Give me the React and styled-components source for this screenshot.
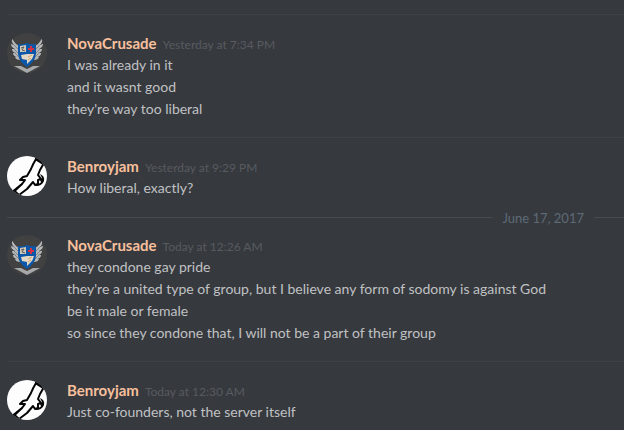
import React from "react";
import styled, { createGlobalStyle } from "styled-components";

const GlobalStyle = createGlobalStyle`
  body {
    margin: 0;
    background: #36393e;
    font-family: Lato, "Open Sans", sans-serif;
  }
`;

const Chat = styled.main`
  padding: 14px 0 0 7px;
`;

const Group = styled.article`
  display: flex;
  gap: 20px;
  padding: ${(props) => (props.$line ? "17px 20px 17px 0" : "16px 20px 17px 0")};
  border-top: ${(props) => (props.$line ? "1px solid #3e4146" : "none")};
`;

const Avatar = styled.svg`
  flex: none;
  width: 40px;
  height: 40px;
  margin-top: 1px;
  border-radius: 50%;
`;

const Body = styled.div`
  flex: 1;
  min-width: 0;
`;

const Header = styled.header`
  display: flex;
  align-items: baseline;
  gap: 6px;
  height: 22px;
  line-height: 22px;
`;

const UserName = styled.h2`
  margin: 0;
  color: #f8c09c;
  font-size: 15px;
  font-weight: 700;
`;

const Timestamp = styled.time`
  color: #585b60;
  font-size: 12px;
`;

const Message = styled.p`
  margin: 0;
  color: #c0c1c3;
  font-size: 14px;
  line-height: 22px;
`;

const DayDivider = styled.div`
  display: flex;
  align-items: center;
  gap: 10px;
  height: 1px;
  margin-top: 1px;
  color: #5e6a76;
  font-size: 13px;

  &::before,
  &::after {
    content: "";
    height: 1px;
    background: #484b50;
  }

  &::before {
    flex: 1;
  }

  &::after {
    width: 30px;
  }
`;

const CrestAvatar = () => (
  <Avatar viewBox="0 0 40 40" role="img" aria-label="NovaCrusade">
    <rect width="40" height="40" fill="#414141" />
    <g fill="#b4b6b8">
      <path d="M5 5 Q7 10 12 13 L13 27 Q9 27 8 24 L10 24 Q6 23 6 20 L9 20 Q5 19 5 16 L8 16 Q4 14 4 11 L7 12 Q4 9 5 5 Z" />
      <path d="M35 5 Q33 10 28 13 L27 27 Q31 27 32 24 L30 24 Q34 23 34 20 L31 20 Q35 19 35 16 L32 16 Q36 14 36 11 L33 12 Q36 9 35 5 Z" />
    </g>
    <g fill="none" stroke="#6d7073" strokeWidth="0.7">
      <path d="M6 11 L12 17 M7 16 L12 21 M8 20 L13 25" />
      <path d="M34 11 L28 17 M33 16 L28 21 M32 20 L27 25" />
    </g>
    <path d="M7 33 L14 33 L20 36 L26 33 L33 33 L20 40 Z" fill="#a7a8a9" />
    <path d="M11 11 Q16 12 20 10 Q24 12 29 11 V21 Q28 29 20 34 Q12 29 11 21 Z" fill="#0d57a8" />
    <path d="M13 13 L19 12 V19 H13 Z" fill="#cfc9bd" />
    <path d="M20 21 H27 Q26 25 24 27 L20 31 L20 27 L15 26 L14 22 Z" fill="#e3d8c8" />
    <path d="M14 15 L17 14 L15 17 L18 18" fill="none" stroke="#5f5a55" />
    <path d="M21 24 L25 22 M21 27 L24 25" stroke="#d3a468" />
    <path d="M24 13 V19 M21 16 H27" stroke="#d32f45" strokeWidth="2" />
  </Avatar>
);

const WingAvatar = () => (
  <Avatar viewBox="0 0 40 40" role="img" aria-label="Benroyjam">
    <rect width="40" height="40" fill="#fdfdfd" />
    <path
      d="M29 3 Q26 8 24 13 L20 20 L16 21 L13 24 L18 24 L15 28 L7 35 L12 39 L20 33 L26 26 L28 29 L31 28 L31 24 L34 23 L31 19 L33 14 L37 7 Z"
      fill="#fdfdfd"
      stroke="#050505"
      strokeWidth="2"
      strokeLinejoin="round"
    />
    <path d="M33 18 Q38 20 37 25 Q35 30 29 30 L29 28 Q33 28 34 26 L33 24 L35 22 Z" fill="#050505" />
    <path d="M28 1 L38 7 L36 9 L28 4 Z" fill="#050505" />
    <path d="M6 34 L15 27 L16 28 L9 35 L12 38 L10 40 L5 36 Z" fill="#050505" />
  </Avatar>
);

const conversation = [
  {
    id: 1,
    user: "NovaCrusade",
    time: "Yesterday at 7:34 PM",
    messages: ["I was already in it", "and it wasnt good", "they're way too liberal"],
  },
  {
    id: 2,
    user: "Benroyjam",
    time: "Yesterday at 9:29 PM",
    messages: ["How liberal, exactly?"],
  },
  {
    id: 3,
    day: "June 17, 2017",
    user: "NovaCrusade",
    time: "Today at 12:26 AM",
    messages: [
      "they condone gay pride",
      "they're a united type of group, but I believe any form of sodomy is against God",
      "be it male or female",
      "so since they condone that, I will not be a part of their group",
    ],
  },
  {
    id: 4,
    user: "Benroyjam",
    time: "Today at 12:30 AM",
    messages: ["Just co-founders, not the server itself"],
  },
];

const App = () => {
  return (
    <>
      <GlobalStyle />
      <Chat>
        {conversation.map((group) => (
          <React.Fragment key={group.id}>
            {group.day && <DayDivider>{group.day}</DayDivider>}
            <Group $line={!group.day}>
              {group.user === "NovaCrusade" ? <CrestAvatar /> : <WingAvatar />}
              <Body>
                <Header>
                  <UserName>{group.user}</UserName>
                  <Timestamp>{group.time}</Timestamp>
                </Header>
                {group.messages.map((text) => (
                  <Message key={text}>{text}</Message>
                ))}
              </Body>
            </Group>
          </React.Fragment>
        ))}
      </Chat>
    </>
  );
};

export default App;
